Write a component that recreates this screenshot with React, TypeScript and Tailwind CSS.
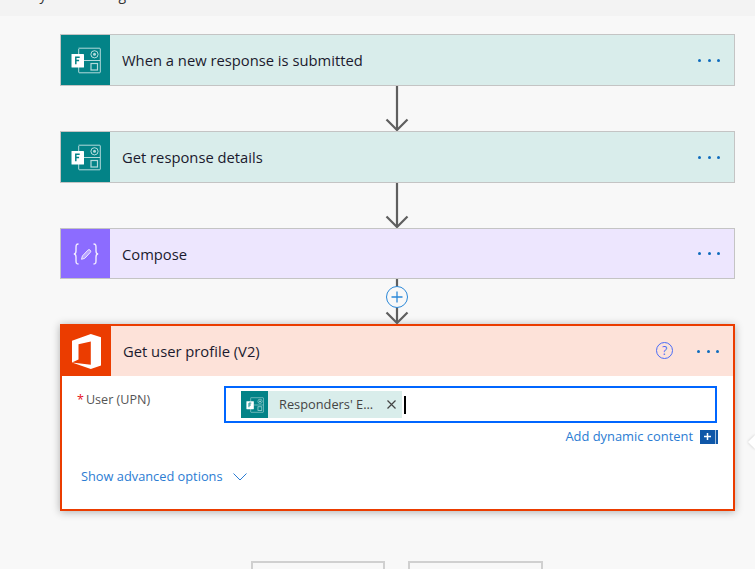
const FONT = "font-['Open_Sans','Noto_Sans',sans-serif]";

function FormsIcon({ className }: { className?: string }) {
  return (
    <svg viewBox="0 0 30 27" className={className} fill="none" stroke="#ffffff">
      <path d="M7.500 1.200H28.500a.8.8 0 0 1 .8.8V25a.8.8 0 0 1-.8.8H8.500a.8.8 0 0 1-.8-.8V20" strokeOpacity="0.7" strokeWidth="1" />
      <path d="M7.700 7V2" strokeOpacity="0.7" strokeWidth="1" />
      <path d="M13 13.500H29" strokeOpacity="0.7" strokeWidth="1" />
      <circle cx="23.500" cy="7.300" r="3.600" strokeOpacity="0.7" strokeWidth="1" />
      <circle cx="23.500" cy="7.300" r="1.500" fill="#ffffff" fillOpacity="0.7" stroke="none" />
      <rect x="20" y="16.500" width="6.500" height="6.500" strokeOpacity="0.7" strokeWidth="1.200" />
      <rect x="0.500" y="7" width="12.500" height="13.500" rx="0.6" fill="#ffffff" stroke="none" />
      <path d="M4.800 17.300V10.300h3.900M4.800 13.500h3.300" stroke="#038387" strokeWidth="1.500" />
    </svg>
  );
}

function ComposeIcon() {
  return (
    <svg viewBox="0 0 26 22" className="w-[26px] h-[22px]" fill="none" stroke="#f0eaff" strokeWidth="1.400">
      <path d="M5.500 1C3 1 3 2.500 3 5v3c0 2-.8 3-2.200 3C2.200 11 3 12 3 14v3c0 2.500 0 4 2.500 4" />
      <path d="M20.500 1C23 1 23 2.500 23 5v3c0 2 .8 3 2.200 3-1.400 0-2.200 1-2.200 3v3c0 2.500 0 4-2.500 4" />
      <path d="M8.500 16.300l.9-3.300 5.400-5.800a1.400 1.400 0 0 1 2.400 2.300l-5.400 5.800z" fill="#b8a4ff" strokeWidth="1" />
    </svg>
  );
}

function OfficeIcon() {
  return (
    <svg viewBox="0 0 29 35" className="w-[29px] h-[35px]" fill="#ffffff">
      <path d="M0 6.800 18.800 0 29 3.200V31.500L18.800 35 0 28.500 18.800 30.800V7.500L6.500 10.300V25.600L0 28.500z" />
    </svg>
  );
}

function Dots() {
  return (
    <div className="flex gap-[6px]">
      <span className="w-[3px] h-[3px] rounded-full bg-[#0f6cbd]" />
      <span className="ml-[1px] w-[3px] h-[3px] rounded-full bg-[#0f6cbd]" />
      <span className="w-[3px] h-[3px] rounded-full bg-[#0f6cbd]" />
    </div>
  );
}

function Arrow({ height }: { height: number }) {
  return (
    <svg width="26" height={height} viewBox={`0 0 26 ${height}`} fill="none" stroke="#5f5f5f" strokeWidth="2.200">
      <path d={`M13 0V${height - 1}`} />
      <path d={`M2.500 ${height - 11.500}L13 ${height - 1}L23.500 ${height - 11.500}`} />
    </svg>
  );
}

function Card({ title, bar, tint, icon, height, titleClass = "" }: { title: string; bar: string; tint: string; icon: React.ReactNode; height: string; titleClass?: string }) {
  return (
    <div className={`flex border border-[#c4c4c4] ${height} ${tint}`}>
      <div className={`flex w-[49px] shrink-0 items-center justify-center ${bar}`}>{icon}</div>
      <div className="flex flex-1 items-center justify-between pl-[12px] pr-[14px]">
        <span className={`text-[14.75px] text-[#1b1a2e] ${titleClass}`}>{title}</span>
        <Dots />
      </div>
    </div>
  );
}

export default function App() {
  return (
    <div className={`relative h-[569px] overflow-hidden bg-[#f8f8f8] ${FONT}`}>
      <div className="h-4 overflow-hidden bg-[#f3f3f3]">
        <p className="-mt-[16px] pl-[27px] text-[14px] text-[#333333]">My flow Editing</p>
      </div>

      <div className="ml-[60px] w-[675px] pt-[18px]">
        <Card title="When a new response is submitted" height="h-[52px]" bar="bg-[#038387]" tint="bg-[#d9edeb]" icon={<FormsIcon className="w-[30px] h-[27px]" />} />
        <div className="flex h-[45px] justify-center pr-[1px]">
          <Arrow height={45} />
        </div>
        <Card title="Get response details" height="h-[52px]" bar="bg-[#038387]" tint="bg-[#d9edeb]" icon={<FormsIcon className="w-[30px] h-[27px]" />} />
        <div className="flex h-[45px] justify-center pr-[1px]">
          <Arrow height={45} />
        </div>
        <Card title="Compose" height="h-[51px]" titleClass="pt-[1px]" bar="bg-[#8c6cff]" tint="bg-[#ede6fe]" icon={<ComposeIcon />} />

        <div className="relative flex h-[45px] justify-center pr-[1px]">
          <Arrow height={45} />
          <div className="absolute left-[326px] top-[7px] flex h-[22px] w-[22px] items-center justify-center rounded-full border border-[#2b88d8] bg-[#f8f8f8]">
            <svg width="12" height="12" viewBox="0 0 12 12" stroke="#2b88d8" strokeWidth="1.300">
              <path d="M6 .5v11M.5 6h11" />
            </svg>
          </div>
        </div>

        <div className="h-[187px] border-2 border-[#eb3c00] bg-white shadow-[0_1px_8px_rgba(0,0,0,0.3)]">
          <div className="flex h-[50px] bg-[#fde2d9]">
            <div className="flex w-[49px] shrink-0 items-center justify-center bg-[#eb3c00]">
              <OfficeIcon />
            </div>
            <div className="flex flex-1 items-center justify-between pl-[12px] pr-[14px]">
              <span className="pt-[1px] text-[14.75px] text-[#1b1a2e]">Get user profile (V2)</span>
              <div className="flex items-center gap-[24px]">
                <span className="-mt-[1px] flex h-[17px] w-[17px] items-center justify-center rounded-full border border-[#4a6cf7] text-[12px] leading-none text-[#4a6cf7]">?</span>
                <Dots />
              </div>
            </div>
          </div>

          <div className="flex pl-[15px] pr-[16px] pt-[10px]">
            <label className="w-[147px] shrink-0 pt-[5px] text-[12.6px] text-[#555555]">
              <span className="mr-[2px] text-[#e81123]">*</span>User (UPN)
            </label>
            <div className="flex h-[37px] flex-1 items-center border-2 border-[#0066ff] pl-[15px]">
              <div className="flex h-[27px] w-[161px] shrink-0 items-center bg-[#d9edeb]">
                <div className="flex h-[27px] w-[27px] shrink-0 items-center justify-center bg-[#038387]">
                  <FormsIcon className="w-[18px] h-[16px]" />
                </div>
                <span className="ml-[11px] whitespace-nowrap text-[12.8px] text-[#444444]">Responders' E...</span>
                <svg className="ml-[14px] shrink-0" width="9" height="9" viewBox="0 0 9 9" stroke="#444444" strokeWidth="1.200">
                  <path d="M.5.5l8 8M8.500.5l-8 8" />
                </svg>
              </div>
              <span className="ml-[2px] h-[18px] w-[2px] bg-black" />
            </div>
          </div>

          <div className="flex items-center justify-end gap-[7px] pr-[15px] pt-[4px]">
            <span className="text-[12.9px] text-[#2b7cd3]">Add dynamic content</span>
            <div className="flex h-[14px] w-[18px] items-center bg-[#0f57a8] pl-[4px]">
              <svg width="7" height="7" viewBox="0 0 7 7" stroke="#ffffff" strokeWidth="1.500">
                <path d="M3.500 0v7M0 3.500h7" />
              </svg>
              <span className="ml-[4px] h-[14px] w-[1px] bg-white opacity-60" />
            </div>
          </div>

          <div className="flex items-center gap-[10px] pl-[19px] pt-[21px]">
            <span className="text-[12.8px] text-[#2b7cd3]">Show advanced options</span>
            <svg width="14" height="8" viewBox="0 0 14 8" fill="none" stroke="#2b7cd3">
              <path d="M.5.5 7 7 13.500.5" />
            </svg>
          </div>
        </div>

        <div className="flex gap-[23px] pl-[191px] pt-[50px]">
          <div className="h-[40px] w-[134px] border-2 border-[#d0d0d0]" />
          <div className="h-[40px] w-[135px] border-2 border-[#d0d0d0]" />
        </div>
      </div>

      <div className="absolute left-[750px] top-[437px] h-[10px] w-[10px] rotate-45 bg-white shadow-[0_0_3px_rgba(0,0,0,0.2)]" />
    </div>
  );
}
